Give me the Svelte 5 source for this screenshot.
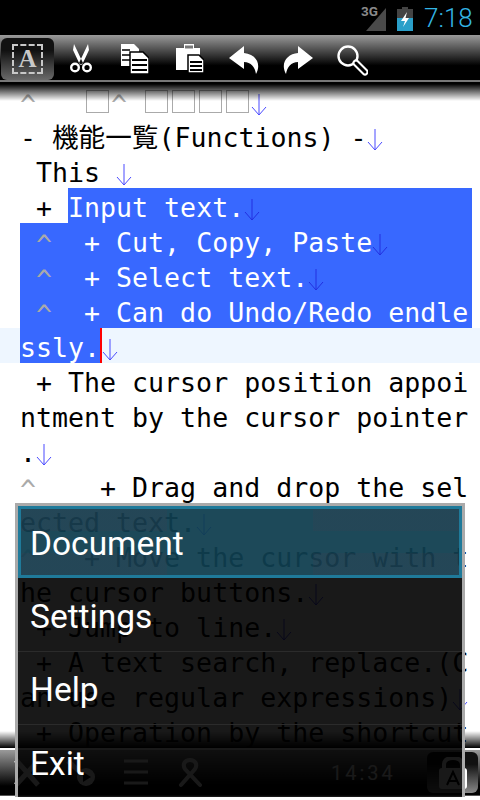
<script>
  const lines = [
    { before: "^   □^ □□□□↓" },
    { before: "- 機能一覧(Functions) -↓" },
    { before: " This ↓" },
    { before: " + ", sel: "Input text.↓", fill: true },
    { sel: " ^  + Cut, Copy, Paste↓", fill: true },
    { sel: " ^  + Select text.↓", fill: true },
    { sel: " ^  + Can do Undo/Redo endle", fill: true },
    { sel: "ssly.", cursor: true, after: "↓", active: true },
    { before: " + The cursor position appoi" },
    { before: "ntment by the cursor pointer" },
    { before: ".↓" },
    { before: "^    + Drag and drop the sel" },
    { before: "ected text.↓" },
    { before: "^   + Move the cursor with t" },
    { before: "he cursor buttons.↓" },
    { before: " + Jump to line.↓" },
    { before: " + A text search, replace.(C" },
    { before: "an use regular expressions)↓" },
    { before: " + Operation by the shortcut" }
  ];

  const menuItems = ["Document", "Settings", "Help", "Exit"];

  function tokens(text) {
    return (text || "").split(/(\^|□|↓)/).filter(Boolean);
  }
</script>

{#snippet run(text)}
  {#each tokens(text) as t}
    {#if t === "^"}
      <span class="caret">^</span>
    {:else if t === "□"}
      <span class="box"></span>
    {:else if t === "↓"}
      <svg class="arrow" width="16" height="24" viewBox="0 0 16 24">
        <path d="M8 1V22M1 14L8 22L15 14" fill="none" stroke="currentColor" stroke-width="1" />
      </svg>
    {:else}
      <span>{t}</span>
    {/if}
  {/each}
{/snippet}

<div class="screen">
  <header class="status">
    <span class="net">3G</span>
    <svg class="signal" width="21" height="23" viewBox="0 0 21 23">
      <path d="M20 0V23H0Z" fill="#4a4a4a" />
    </svg>
    <svg class="battery" width="16" height="24" viewBox="0 0 16 24">
      <path d="M5 0H11V2H16V24H0V2H5Z" fill="#444" />
      <path d="M0 11H16V24H0Z" fill="#2a9fc9" />
      <path d="M10 5L4 14H8L6 20L12 11H8.500Z" fill="#fff" />
    </svg>
    <span class="clock">7:18</span>
  </header>

  <nav class="toolbar">
    <button class="select-btn">
      <span class="select-mark">A</span>
    </button>
    <svg class="tool scissors" width="24" height="29" viewBox="0 0 24 29">
      <path d="M5 0L14 19L11 21L4 6ZM19 0L10 19L13 21L20 6Z" fill="#fff" />
      <circle cx="6" cy="23.500" r="3.800" fill="none" stroke="#fff" stroke-width="2.400" />
      <circle cx="18" cy="23.500" r="3.800" fill="none" stroke="#fff" stroke-width="2.400" />
    </svg>
    <svg class="tool copy" width="28" height="30" viewBox="0 0 28 30">
      <path d="M0 0H13L18 5V22H0Z" fill="#fff" />
      <path d="M1 6H9M1 11H9M1 16H9" stroke="#000" stroke-width="1.500" />
      <path d="M9 8H22L28 14V30H9Z" fill="#fff" stroke="#000" stroke-width="1.500" />
      <path d="M11 16H26M11 21H26M11 26H26" stroke="#000" stroke-width="2" />
    </svg>
    <svg class="tool paste" width="28" height="29" viewBox="0 0 28 29">
      <path d="M0 4H8V0H18V4H24V26H0Z" fill="#fff" />
      <path d="M9 1.500H17V4.500H9Z" fill="#777" />
      <path d="M12 11H23L28 16V29H12Z" fill="#fff" stroke="#000" stroke-width="1.500" />
      <path d="M14 18H26M14 22H26M14 26H26" stroke="#000" stroke-width="1.800" />
    </svg>
    <svg class="tool undo" width="30" height="28" viewBox="0 0 30 28">
      <path d="M0 12L15 0V7C26 8 33 17 27 28C26 21 22 16 15 16V23Z" fill="#fff" />
    </svg>
    <svg class="tool redo" width="30" height="28" viewBox="0 0 30 28">
      <path d="M30 12L15 0V7C4 8 -3 17 3 28C4 21 8 16 15 16V23Z" fill="#fff" />
    </svg>
    <svg class="tool search" width="31" height="31" viewBox="0 0 31 31">
      <circle cx="11" cy="11" r="9.500" fill="none" stroke="#fff" stroke-width="2.400" />
      <path d="M19 18L28 27" stroke="#fff" stroke-width="7" stroke-linecap="round" />
      <path d="M19 18L28 27" stroke="#000" stroke-width="3" stroke-linecap="round" />
    </svg>
  </nav>

  <main class="editor">
    {#each lines as line}
      <div class="line" class:active={line.active}>
        {#if line.before}
          <div class="seg">{@render run(line.before)}</div>
        {/if}
        {#if line.sel}
          <div class="seg sel" class:fill={line.fill}>{@render run(line.sel)}</div>
        {/if}
        {#if line.cursor}
          <i class="cursor"></i>
        {/if}
        {#if line.after}
          <div class="seg">{@render run(line.after)}</div>
        {/if}
      </div>
    {/each}
    <div class="shade-top"></div>
    <div class="shade-bottom"></div>
  </main>

  <footer class="bottombar">
    <svg class="dim tools" width="28" height="30" viewBox="0 0 28 30">
      <path d="M3 2L25 27M25 3L3 27" stroke="#fff" stroke-width="5" />
    </svg>
    <svg class="dim play" width="30" height="30" viewBox="0 0 30 30">
      <path d="M2 3L16 16" stroke="#fff" stroke-width="5" />
      <circle cx="20" cy="19" r="9" fill="#fff" />
      <path d="M17 14L25 19L17 24Z" fill="#000" />
    </svg>
    <svg class="dim list" width="24" height="26" viewBox="0 0 24 26">
      <path d="M0 2H24M0 13H24M0 24H24" stroke="#fff" stroke-width="3" />
    </svg>
    <svg class="dim ribbon" width="26" height="30" viewBox="0 0 26 30">
      <path d="M3 27L17 11C20 6 17 2 12 2C7 2 4 6 7 11L22 27" fill="none" stroke="#fff" stroke-width="4" stroke-linecap="round" />
    </svg>
    <span class="bar-time">14:34</span>
    <div class="lock-btn">
      <svg width="30" height="32" viewBox="0 0 30 32">
        <path d="M6 12V8C6 3 10 1 15 1C20 1 24 3 24 8V12" fill="none" stroke="#fff" stroke-width="4" />
        <rect x="1" y="11" width="28" height="21" rx="3" fill="#fff" />
        <path d="M9 28L15 15L21 28M11 24H19" fill="none" stroke="#000" stroke-width="2" />
      </svg>
    </div>
  </footer>

  <div class="menu">
    {#each menuItems as item, i}
      <div class="menu-item" class:selected={i === 0}>{item}</div>
    {/each}
  </div>
</div>

<style>
  :global(body) {
    background: #000;
  }

  .screen {
    position: relative;
    width: 480px;
    height: 800px;
    display: flex;
    flex-direction: column;
    overflow: hidden;
    background: #fff;
  }

  .status {
    height: 35px;
    flex: none;
    background: #000;
    position: relative;
    display: flex;
    align-items: center;
    justify-content: flex-end;
    padding-right: 10px;
    box-sizing: border-box;
  }

  .net {
    position: absolute;
    left: 361px;
    top: 3px;
    font: bold 13.500px "Roboto", sans-serif;
    color: #8a8a8a;
  }

  .signal {
    margin-right: 10px;
    margin-top: 3px;
  }

  .battery {
    margin-right: 11px;
    margin-top: 3px;
  }

  .clock {
    font: 300 26px "Roboto", sans-serif;
    color: #33b5e5;
    width: 46px;
  }

  .toolbar {
    height: 47px;
    flex: none;
    box-sizing: border-box;
    display: flex;
    align-items: flex-start;
    background: linear-gradient(#9a9a9a 0, #000 68%, #000 96%);
    border-bottom: 2px solid #777;
    position: relative;
  }

  .select-btn {
    margin: 3px 0 0 1px;
    width: 53px;
    height: 42px;
    border: 0;
    border-radius: 6px;
    background: linear-gradient(#111 0, #111 30%, #6a6a6a 100%);
    padding: 6px 11px;
    box-sizing: border-box;
  }

  .select-mark {
    display: block;
    height: 100%;
    border: 2px dashed #c8c8c8;
    box-sizing: border-box;
    color: #c8c8c8;
    font: bold 25px/26px "Liberation Serif", serif;
    text-align: center;
  }

  .tool {
    flex: none;
  }

  .scissors {
    margin: 9px 0 0 15px;
  }

  .copy {
    margin: 9px 0 0 28px;
  }

  .paste {
    margin: 9px 0 0 27px;
  }

  .undo {
    margin: 11px 0 0 25px;
  }

  .redo {
    margin: 11px 0 0 24px;
  }

  .search {
    margin: 10px 0 0 24px;
  }

  .editor {
    position: relative;
    height: 666px;
    flex: none;
    overflow: hidden;
    background: #fff;
    padding-top: 1px;
    box-sizing: border-box;
    font: 26.6px/35px "DejaVu Sans Mono", "Noto Sans CJK JP", monospace;
    color: #000;
  }

  .line {
    display: flex;
    height: 35px;
    padding-left: 20px;
    white-space: pre;
  }

  .line.active {
    background: #eef6ff;
  }

  .seg {
    display: flex;
    align-items: center;
    flex: none;
    padding-top: 4px;
    box-sizing: border-box;
    color: #000;
  }

  .seg .arrow {
    color: #4a4aff;
  }

  .sel {
    background: #3868ff;
    color: #fff;
  }

  .sel .arrow {
    color: #2230e0;
  }

  .sel.fill {
    flex: 1;
    margin-right: 8px;
  }

  .caret {
    color: #aaa;
    position: relative;
    top: 2px;
  }

  .box {
    display: inline-block;
    box-sizing: border-box;
    width: 23px;
    height: 23px;
    margin: 0 2px;
    border: 1px solid #aaa;
    position: relative;
    top: -1px;
  }

  .arrow {
    flex: none;
    position: relative;
    top: 2px;
  }

  .cursor {
    width: 2px;
    background: #f00;
    flex: none;
  }

  .shade-top {
    position: absolute;
    top: 0;
    left: 0;
    right: 0;
    height: 19px;
    background: linear-gradient(#000 10%, rgba(0, 0, 0, 0));
  }

  .shade-bottom {
    position: absolute;
    bottom: 0;
    left: 0;
    right: 0;
    height: 17px;
    background: linear-gradient(rgba(0, 0, 0, 0), #000);
  }

  .bottombar {
    height: 46px;
    flex: none;
    margin-top: 2px;
    box-sizing: border-box;
    position: relative;
    display: flex;
    align-items: flex-start;
    background: linear-gradient(#9a9a9a 0, #000 80%);
    border-bottom: 1px solid #555;
  }

  .dim {
    flex: none;
    margin-top: 8px;
  }

  .tools {
    margin-left: 13px;
  }

  .play {
    margin-left: 25px;
  }

  .list {
    margin-left: 28px;
    margin-top: 9px;
  }

  .ribbon {
    margin-left: 30px;
  }

  .bar-time {
    position: absolute;
    left: 331px;
    top: 11px;
    font: 20px "Roboto", sans-serif;
    letter-spacing: 3px;
    color: #fff;
  }

  .lock-btn {
    position: absolute;
    left: 427px;
    top: 2px;
    width: 51px;
    height: 41px;
    border-radius: 6px;
    background: linear-gradient(#111 0, #111 30%, #888 100%);
    display: flex;
    align-items: center;
    justify-content: center;
  }

  .menu {
    position: absolute;
    left: 15px;
    top: 503px;
    width: 450px;
    height: 294px;
    box-sizing: border-box;
    border: 3px solid #aaa;
    border-bottom: 0;
    background: rgba(0, 0, 0, 0.9);
  }

  .menu-item {
    height: 73px;
    box-sizing: border-box;
    padding: 3px 0 0 12px;
    display: flex;
    align-items: center;
    font: 33.5px "Roboto", sans-serif;
    color: #fff;
    border-bottom: 1px solid #2b2b2b;
  }

  .menu-item.selected {
    height: 72px;
    margin-bottom: 1px;
    padding-left: 9px;
    border: 3px solid #1f7a9a;
    background:
      linear-gradient(rgba(120, 40, 60, 0.08), rgba(120, 40, 60, 0.08)) 0 0 / 146px 22px no-repeat,
      linear-gradient(rgba(120, 40, 60, 0.08), rgba(120, 40, 60, 0.08)) 292px 0 / 146px 22px no-repeat,
      linear-gradient(rgba(120, 40, 60, 0.08), rgba(120, 40, 60, 0.08)) 0 44px / 146px 22px no-repeat,
      linear-gradient(rgba(120, 40, 60, 0.08), rgba(120, 40, 60, 0.08)) 292px 44px / 146px 22px no-repeat,
      rgba(35, 145, 185, 0.4);
  }

  .menu-item:last-child {
    border-bottom: 0;
  }
</style>
